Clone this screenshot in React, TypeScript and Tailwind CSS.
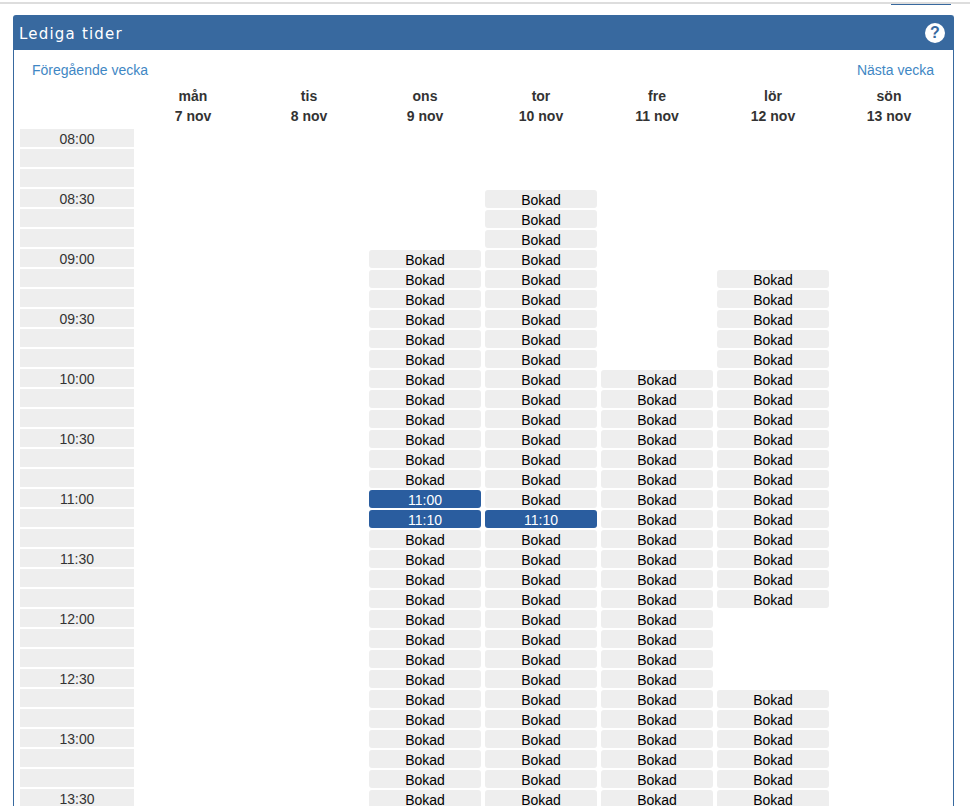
const days = [
  ["mån", "7 nov"],
  ["tis", "8 nov"],
  ["ons", "9 nov"],
  ["tor", "10 nov"],
  ["fre", "11 nov"],
  ["lör", "12 nov"],
  ["sön", "13 nov"],
];

const ROWS = 34;

function label(i: number) {
  const minutes = 8 * 60 + i * 10;
  const h = String(Math.floor(minutes / 60)).padStart(2, "0");
  const m = String(minutes % 60).padStart(2, "0");
  return `${h}:${m}`;
}

function isBooked(day: number, i: number) {
  if (day === 2) return i >= 6;
  if (day === 3) return i >= 3;
  if (day === 4) return i >= 12;
  if (day === 5) return (i >= 7 && i <= 23) || i >= 28;
  return false;
}

function isFree(day: number, i: number) {
  return (day === 2 && (i === 18 || i === 19)) || (day === 3 && i === 19);
}

function Slot({ day, row }: { day: number; row: number }) {
  if (isFree(day, row)) {
    return (
      <div className="w-[112px] h-[18px] mt-[1px] rounded-[3px] bg-[#2a5d9f] text-white text-center text-[14px] leading-[20px]">
        {label(row)}
      </div>
    );
  }
  if (isBooked(day, row)) {
    return (
      <div className="w-[112px] h-[18px] mt-[1px] rounded-[3px] bg-[#eeeeee] text-black text-center text-[14px] leading-[20px]">
        Bokad
      </div>
    );
  }
  return <div className="w-[112px] h-[18px]" />;
}

export default function App() {
  return (
    <div className="h-[806px] overflow-hidden bg-white font-['Liberation_Sans',Arial,sans-serif] text-[#333333]">
      <div className="h-[2px] mt-[2px] bg-[#dddddd]" />
      <div className="flex justify-end pr-[19px] h-[1px]">
        <div className="w-[60px] h-[1px] bg-[#38699f]" />
      </div>
      <div className="ml-[13px] mt-[10px] w-[941px] rounded-t-[3px] border border-b-0 border-[#38699f]">
        <div className="h-[34px] bg-[#38699f] flex items-center justify-between pl-[5px] pr-[8px]">
          <span className="pt-[2px] font-['DejaVu_Sans',Verdana,sans-serif] text-[15px] tracking-[1.2px] text-white">
            Lediga tider
          </span>
          <span className="w-[20px] h-[20px] rounded-full bg-white flex items-center justify-center text-[#38699f] text-[16px] font-bold leading-none">
            ?
          </span>
        </div>
        <div className="flex justify-between pl-[18px] pr-[19px] pt-[12px] h-[36px] text-[14px] leading-[16px] text-[#3f87c4]">
          <span>Föregående vecka</span>
          <span>Nästa vecka</span>
        </div>
        <div className="flex pl-[123px] gap-[4px] h-[43px]">
          {days.map(([d, date]) => (
            <div key={d} className="w-[112px] text-center text-[14px] font-bold leading-[20px]">
              <div>{d}</div>
              <div>{date}</div>
            </div>
          ))}
        </div>
        <div className="flex flex-col gap-[2px] pl-[6px]">
          {Array.from({ length: ROWS }, (_, i) => (
            <div key={i} className="flex h-[18px] gap-[4px]">
              <div className="w-[114px] mr-[-1px] h-[18px] bg-[#eeeeee] text-center text-[14px] leading-[20px]">
                {i % 3 === 0 ? label(i) : ""}
              </div>
              {days.map((_d, day) => (
                <Slot key={day} day={day} row={i} />
              ))}
            </div>
          ))}
        </div>
      </div>
    </div>
  );
}
